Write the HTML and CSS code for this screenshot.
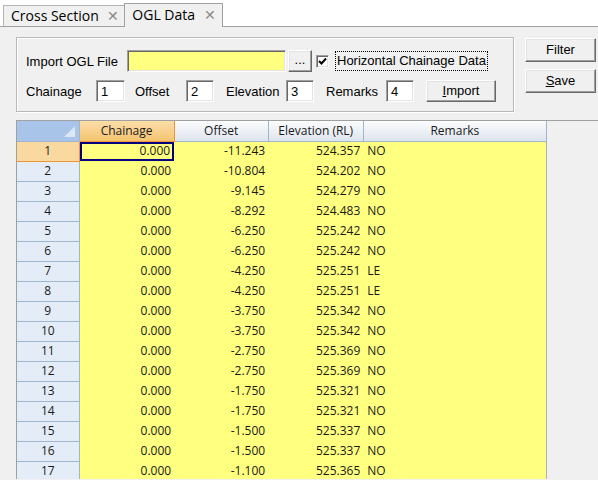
FILE: index.html
```html
<!DOCTYPE html>
<html lang="en">
<head>
  <meta charset="UTF-8">
  <title>OGL Data</title>
  <link rel="stylesheet" href="styles.css">
</head>
<body>

  <div class="tabstrip">
    <div class="tab">Cross Section <span class="close">&#x2715;</span></div>
    <div class="tab active">OGL Data <span class="close">&#x2715;</span></div>
  </div>

  <div class="page">
    <div class="top">
      <div class="groupbox">
        <div class="row">
          <label class="lbl lbl-file">Import OGL File</label>
          <div class="field field-file"></div>
          <div class="btn btn-browse">...</div>
          <div class="check">
            <svg width="9" height="9" viewBox="0 0 9 9"><path d="M1 4 L3.5 6.5 L8 1.5" fill="none" stroke="#000" stroke-width="2"/></svg>
          </div>
          <div class="focus-label">Horizontal Chainage Data</div>
        </div>
        <div class="row">
          <label class="lbl lbl-chainage">Chainage</label>
          <div class="field field-num field-first">1</div>
          <label class="lbl lbl-offset">Offset</label>
          <div class="field field-num">2</div>
          <label class="lbl lbl-elev">Elevation</label>
          <div class="field field-num">3</div>
          <label class="lbl lbl-remarks">Remarks</label>
          <div class="field field-num">4</div>
          <div class="btn btn-import"><u>I</u>mport</div>
        </div>
      </div>

      <div class="side-buttons">
        <div class="btn btn-side">Filter</div>
        <div class="btn btn-side"><u>S</u>ave</div>
      </div>
    </div>

    <div class="grid-wrap">
      <table class="grid">
        <colgroup>
          <col style="width:62px">
          <col style="width:95px">
          <col style="width:94px">
          <col style="width:95px">
          <col style="width:183px">
        </colgroup>
        <thead>
          <tr>
            <th class="corner"><span class="corner-tri"></span></th>
            <th class="sel">Chainage</th>
            <th>Offset</th>
            <th>Elevation (RL)</th>
            <th>Remarks</th>
          </tr>
        </thead>
        <tbody>
          <tr class="current"><td class="rh">1</td><td class="num active-cell">0.000</td><td class="num">-11.243</td><td class="num">524.357</td><td class="txt">NO</td></tr>
          <tr><td class="rh">2</td><td class="num">0.000</td><td class="num">-10.804</td><td class="num">524.202</td><td class="txt">NO</td></tr>
          <tr><td class="rh">3</td><td class="num">0.000</td><td class="num">-9.145</td><td class="num">524.279</td><td class="txt">NO</td></tr>
          <tr><td class="rh">4</td><td class="num">0.000</td><td class="num">-8.292</td><td class="num">524.483</td><td class="txt">NO</td></tr>
          <tr><td class="rh">5</td><td class="num">0.000</td><td class="num">-6.250</td><td class="num">525.242</td><td class="txt">NO</td></tr>
          <tr><td class="rh">6</td><td class="num">0.000</td><td class="num">-6.250</td><td class="num">525.242</td><td class="txt">NO</td></tr>
          <tr><td class="rh">7</td><td class="num">0.000</td><td class="num">-4.250</td><td class="num">525.251</td><td class="txt">LE</td></tr>
          <tr><td class="rh">8</td><td class="num">0.000</td><td class="num">-4.250</td><td class="num">525.251</td><td class="txt">LE</td></tr>
          <tr><td class="rh">9</td><td class="num">0.000</td><td class="num">-3.750</td><td class="num">525.342</td><td class="txt">NO</td></tr>
          <tr><td class="rh">10</td><td class="num">0.000</td><td class="num">-3.750</td><td class="num">525.342</td><td class="txt">NO</td></tr>
          <tr><td class="rh">11</td><td class="num">0.000</td><td class="num">-2.750</td><td class="num">525.369</td><td class="txt">NO</td></tr>
          <tr><td class="rh">12</td><td class="num">0.000</td><td class="num">-2.750</td><td class="num">525.369</td><td class="txt">NO</td></tr>
          <tr><td class="rh">13</td><td class="num">0.000</td><td class="num">-1.750</td><td class="num">525.321</td><td class="txt">NO</td></tr>
          <tr><td class="rh">14</td><td class="num">0.000</td><td class="num">-1.750</td><td class="num">525.321</td><td class="txt">NO</td></tr>
          <tr><td class="rh">15</td><td class="num">0.000</td><td class="num">-1.500</td><td class="num">525.337</td><td class="txt">NO</td></tr>
          <tr><td class="rh">16</td><td class="num">0.000</td><td class="num">-1.500</td><td class="num">525.337</td><td class="txt">NO</td></tr>
          <tr><td class="rh">17</td><td class="num">0.000</td><td class="num">-1.100</td><td class="num">525.365</td><td class="txt">NO</td></tr>
        </tbody>
      </table>
    </div>
  </div>

</body>
</html>
```

FILE: styles.css
```css
* {
  margin: 0;
  padding: 0;
  box-sizing: border-box;
}

body {
  width: 598px;
  height: 480px;
  overflow: hidden;
  background: #f0f0f0;
  font-family: 'Liberation Sans', Arial, sans-serif;
  font-size: 13px;
  color: #000;
}

/* tab strip */
.tabstrip {
  height: 27px;
  background: #fff;
  border-bottom: 1px solid #a0a0a0;
  display: flex;
  align-items: flex-end;
  padding-left: 3px;
}

.tab {
  height: 21px;
  padding: 0 5px 0 7px;
  border: 1px solid #b4b4b4;
  border-bottom: none;
  background: #f0f0f0;
  font-family: 'Open Sans', sans-serif;
  font-size: 14px;
  line-height: 19px;
  color: #000;
  white-space: nowrap;
}

.tab.active {
  height: 24px;
  margin-bottom: -1px;
  margin-left: -1px;
  padding: 1px 6px 0 7px;
  border-color: #a0a0a0;
  background: #f0f0f0;
}

.close {
  font-size: 14px;
  color: #8a8a8a;
  margin-left: 5px;
}

/* form area */
.page {
  padding-top: 9px;
}

.top {
  display: flex;
  padding-left: 16px;
  height: 84px;
}

.groupbox {
  width: 498px;
  height: 75px;
  margin-top: 1px;
  border: 1px solid #b9b9b9;
  box-shadow: inset 1px 1px 0 #fff, 1px 1px 0 #fff;
  padding: 12px 0 0 9px;
  display: flex;
  flex-direction: column;
  gap: 8px;
}

.row {
  display: flex;
  align-items: center;
  height: 22px;
}

.lbl {
  display: block;
  white-space: nowrap;
}

.lbl-file { width: 101px; }
.lbl-chainage { width: 70px; }
.lbl-offset { width: 51px; margin-left: 10px; }
.lbl-elev { width: 60px; margin-left: 12px; }
.lbl-remarks { width: 60px; margin-left: 12px; }

.field {
  height: 22px;
  background: #fff;
  border-top: 1px solid #a0a0a0;
  border-left: 1px solid #a0a0a0;
  border-right: 1px solid #fff;
  border-bottom: 1px solid #fff;
  box-shadow: inset 1px 1px 0 #696969, inset -1px -1px 0 #e3e3e3;
  padding: 3px 0 0 4px;
  line-height: 16px;
}

.field-file {
  width: 159px;
  background: #ffff80;
}

.field-num {
  width: 28px;
}

.field-first {
  width: 29px;
}

.btn {
  background: #f0f0f0;
  border-top: 1px solid #fff;
  border-left: 1px solid #fff;
  border-right: 1px solid #696969;
  border-bottom: 1px solid #696969;
  box-shadow: inset -1px -1px 0 #a0a0a0, inset 1px 1px 0 #e3e3e3;
  text-align: center;
}

.btn-browse {
  width: 24px;
  height: 22px;
  margin-left: 2px;
  line-height: 18px;
}

.btn-import {
  width: 70px;
  height: 22px;
  margin-left: 12px;
  line-height: 19px;
}

.check {
  width: 13px;
  height: 13px;
  margin-left: 4px;
  background: #fff;
  border-top: 1px solid #a0a0a0;
  border-left: 1px solid #a0a0a0;
  border-right: 1px solid #fff;
  border-bottom: 1px solid #fff;
  box-shadow: inset 1px 1px 0 #696969, inset -1px -1px 0 #e3e3e3;
  display: flex;
  align-items: center;
  justify-content: center;
}

.focus-label {
  margin-left: 6px;
  height: 20px;
  padding: 0 1px;
  border: 1px dotted #000;
  line-height: 18px;
  white-space: nowrap;
}

.side-buttons {
  margin-left: 11px;
  margin-top: 2px;
  display: flex;
  flex-direction: column;
  gap: 7px;
}

.btn-side {
  width: 71px;
  height: 24px;
  line-height: 21px;
}

/* grid */
.grid-wrap {
  margin-left: 16px;
  height: 359px;
  overflow: hidden;
  border-top: 1px solid #a0a0a0;
  border-left: 1px solid #a0a0a0;
  background: #f0f0f0;
}

.grid {
  border-collapse: collapse;
  table-layout: fixed;
  width: 530px;
  font-family: 'Open Sans', sans-serif;
  font-size: 12px;
  color: #1a1a1a;
  border-right: 1px solid #b0b0b0;
}

.grid th {
  height: 20px;
  font-weight: normal;
  text-align: center;
  background: linear-gradient(#fbfcfd, #dde4ee);
  border-right: 1px solid #9eb6ce;
  border-bottom: 1px solid #9eb6ce;
  padding: 0;
  line-height: 18px;
}

.grid th.sel {
  background: linear-gradient(#fbdda9, #f4c470);
  border-right: 1px solid #f29536;
  border-bottom: 1px solid #f29536;
}

.grid th.corner {
  position: relative;
  background: #a9c4e9;
  border-right: 1px solid #9eb6ce;
}

.corner-tri {
  position: absolute;
  right: 4px;
  bottom: 4px;
  width: 0;
  height: 0;
  border-left: 11px solid transparent;
  border-bottom: 11px solid #dce6f4;
}

.grid td {
  height: 20px;
  padding: 0;
  line-height: 18px;
  background: #ffff80;
  white-space: nowrap;
  overflow: hidden;
}

.grid td.rh {
  text-align: center;
  background: #e4ecf7;
  border-right: 1px solid #9eb6ce;
  border-bottom: 1px solid #9eb6ce;
}

.grid tr.current td.rh {
  background: #f9d99f;
  border-right-color: #f29536;
  border-bottom-color: #f29536;
}

.grid td.num {
  text-align: right;
  padding-right: 3px;
}

.grid td.txt {
  padding-left: 4px;
}

.grid td.active-cell {
  box-shadow: inset 0 0 0 2px #000080;
  padding-right: 4px;
}
```
